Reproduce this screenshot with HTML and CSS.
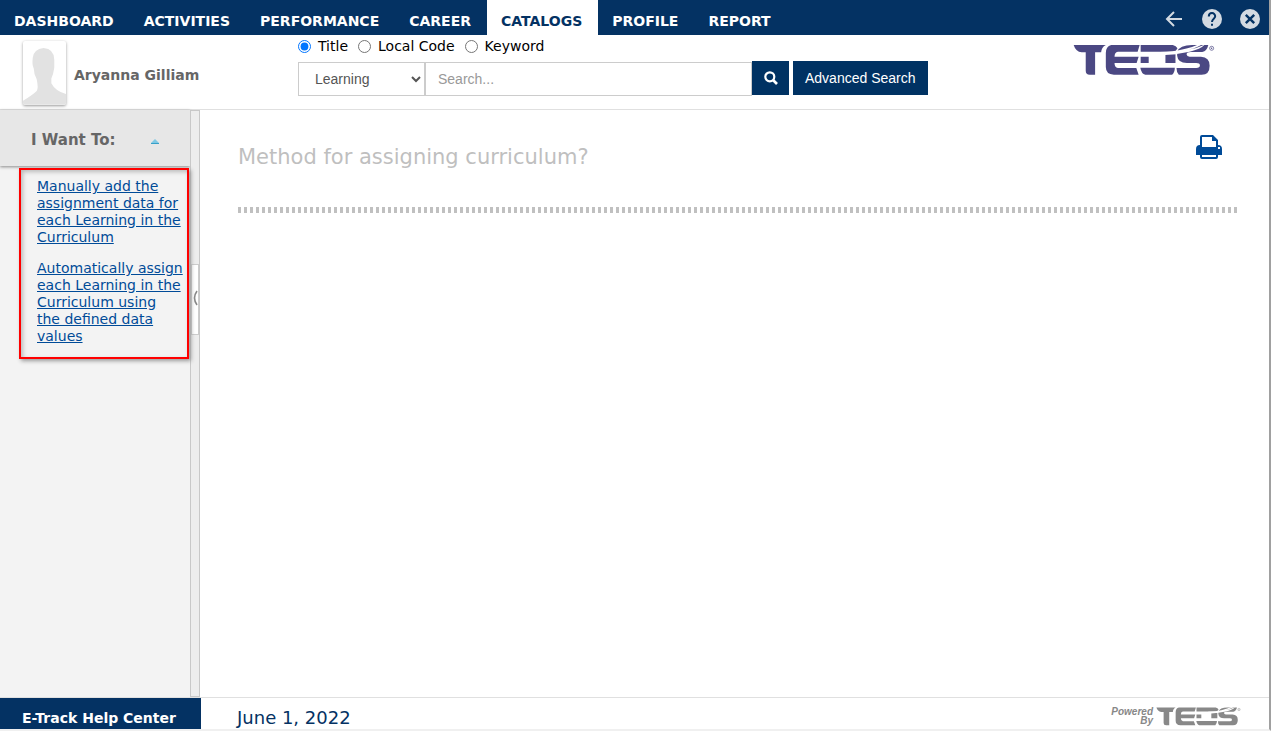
FILE: index.html
```html
<!DOCTYPE html>
<html lang="en">
<head>
<meta charset="utf-8">
<title>Method for assigning curriculum</title>
<link rel="stylesheet" href="styles.css">
</head>
<body>
<svg class="defs" aria-hidden="true">
  <symbol id="teds" viewBox="40 28 424 94">
    <path d="M42 30H138C129 34 125 42 124 52H106V119H90Q78 119 78 107V52H66Q48 50 42 30Z"/>
    <path d="M154 30H239L233 50H174Q164 51 164 65H236L230 84H164Q164 98 174 99H229L236 119H162Q138 118 138 96V54Q138 34 154 30Z"/>
    <path d="M242 30H338Q348 32 352 40L345 50H242ZM242 65H266V84H242ZM316 58H346V84H316ZM241 98H344Q344 112 336 119H256Q244 116 241 98Z"/>
    <path d="M396 30H444Q440 48 426 51H392Q380 51 379 58Q380 65 388 65H422Q448 66 448 92Q448 119 424 119H356Q349 112 349 99H408Q419 99 419 91Q419 84 408 84H380Q353 83 351 62V50Q358 30 396 30Z"/>
    <path d="M300 57V51Q340 51 366 44Q400 36 416 28H426Q412 38 386 44Q412 40 434 29Q420 44 388 50Q350 58 315 60Z" fill="#fff"/>
    <path d="M347 28H378Q364 32 356 41Z" fill="#fff"/>
    <circle cx="454" cy="40" r="6" fill="none" stroke="currentColor" stroke-width="2"/>
    <circle cx="454" cy="40" r="2"/>
  </symbol>
</svg>
<div class="app">
  <header class="topbar">
    <nav class="menu" aria-label="Main">
      <a href="#">DASHBOARD</a>
      <a href="#">ACTIVITIES</a>
      <a href="#">PERFORMANCE</a>
      <a href="#">CAREER</a>
      <a href="#" class="current" aria-current="page">CATALOGS</a>
      <a href="#">PROFILE</a>
      <a href="#">REPORT</a>
    </nav>
    <div class="tools">
      <button type="button" aria-label="Back"><svg viewBox="0 0 20 20"><path d="M18 10H3M10 3L3 10L10 17" fill="none" stroke="currentColor" stroke-width="2"/></svg></button>
      <button type="button" aria-label="Help"><svg viewBox="0 0 20 20"><circle cx="10" cy="10" r="10" fill="currentColor"/><path d="M6.8 7.5C6.8 3 13.2 3 13.2 7.3C13.2 9.8 10 9.8 10 13" fill="none" stroke="#043263" stroke-width="2"/><path d="M9 14.8h2v2H9z" fill="#043263"/></svg></button>
      <button type="button" aria-label="Close"><svg viewBox="0 0 20 20"><circle cx="10" cy="10" r="10" fill="currentColor"/><path d="M5.8 5.8L14.2 14.2M14.2 5.8L5.8 14.2" stroke="#043263" stroke-width="2.4"/></svg></button>
    </div>
  </header>

  <section class="banner">
    <div class="user">
      <svg class="avatar" viewBox="0 0 44 65" aria-hidden="true"><path d="M0 65V61Q10 55 14 51Q16 48 14 39Q11 33 11 28Q9 24 10 17Q11 8 21 7Q32 8 32 19V27Q31 34 29 38V43Q33 51 44 54V65Z" fill="#e2e2e2"/></svg>
      <span>Aryanna Gilliam</span>
    </div>
    <form class="search">
      <div class="scope">
        <label><input type="radio" name="scope" checked>Title</label>
        <label><input type="radio" name="scope">Local Code</label>
        <label><input type="radio" name="scope">Keyword</label>
      </div>
      <div class="fields">
        <select aria-label="Catalog"><option>Learning</option></select>
        <input type="text" placeholder="Search..." aria-label="Search">
        <button class="find" type="button" aria-label="Search"><svg viewBox="0 0 14 14"><circle cx="5.8" cy="5.8" r="4.5" fill="none" stroke="currentColor" stroke-width="2.2"/><path d="M9 9l4 4" stroke="currentColor" stroke-width="2.6"/></svg></button>
        <button class="advanced" type="button">Advanced Search</button>
      </div>
    </form>
    <svg class="brand" role="img" aria-label="TEDS"><use href="#teds"/></svg>
  </section>

  <div class="body">
    <aside class="side">
      <h2>I Want To: <svg viewBox="0 0 8 5" aria-hidden="true"><path d="M0 5V4L4 0L8 4V5Z" fill="#7fc8e4"/><path d="M0 4h8v1H0z" fill="#38a0c8"/></svg></h2>
      <div class="options">
        <a href="#">Manually add the assignment data for each Learning in the Curriculum</a>
        <a href="#">Automatically assign each Learning in the Curriculum using<br>the defined data values</a>
      </div>
    </aside>
    <div class="splitter">
      <button type="button" aria-label="Collapse panel"><svg viewBox="0 0 5 16"><path d="M4 1Q-1 8 4 15" fill="none" stroke="#888" stroke-width="1.6"/></svg></button>
    </div>
    <main class="content">
      <div class="heading">
        <h1>Method for assigning curriculum?</h1>
        <button type="button" aria-label="Print"><svg viewBox="0 0 26 24"><path fill-rule="evenodd" d="M4 10V2Q4 0 6 0H17L22 5V10Q26 10 26 14V20H22V22Q22 24 20 24H6Q4 24 4 22V20H0V14Q0 10 4 10ZM6 2V12H20V6H16V2ZM6 20V22H20V20ZM22 12V14H24V12Z" fill="#004b98"/></svg></button>
      </div>
      <div class="rule"></div>
    </main>
  </div>

  <footer class="footer">
    <a class="help" href="#">E-Track Help Center</a>
    <span class="date">June 1, 2022</span>
    <div class="powered">
      <span>Powered<br>By</span>
      <svg role="img" aria-label="TEDS"><use href="#teds"/></svg>
    </div>
  </footer>
</div>
</body>
</html>
```
FILE: styles.css
```css
* { box-sizing: border-box; }
body {
  margin: 0;
  font-family: Verdana, "DejaVu Sans", sans-serif;
  font-size: 14px;
  color: #000;
  background: #fff;
}
button { border: 0; padding: 0; background: none; cursor: pointer; }
svg { display: block; }
.defs { display: none; }

.app {
  display: flex;
  flex-direction: column;
  height: 100vh;
  border-right: 2px solid #a0a0a0;
  border-bottom: 2px solid #f0f0f0;
}

.topbar {
  display: flex;
  justify-content: space-between;
  height: 35px;
  flex: none;
  background: #043263;
}
.menu { display: flex; }
.menu a {
  padding: 7px 16px 0 14px;
  line-height: 28px;
  font-size: 14px;
  font-weight: bold;
  color: #fff;
  text-decoration: none;
}
.menu .current { background: #fff; color: #043263; }
.tools {
  display: flex;
  align-items: center;
  gap: 18px;
  padding: 3px 9px 0 0;
}
.tools button { color: #d3dae2; }
.tools svg { width: 20px; height: 20px; }

.banner {
  display: flex;
  flex: none;
  height: 75px;
  border-bottom: 1px solid #e0e0e0;
}
.user {
  display: flex;
  gap: 8px;
  width: 298px;
  padding: 6px 0 0 23px;
  line-height: 68px;
  font-weight: bold;
  color: #666;
}
.avatar { width: 43px; height: 64px; border-radius: 2px; box-shadow: 0 1px 3px #999; }
.search { display: flex; flex-direction: column; gap: 5px; }
.scope { display: flex; gap: 10px; padding-top: 2px; }
.scope label { display: flex; align-items: center; gap: 7px; line-height: 19px; }
.scope input { width: 13px; height: 13px; margin: 0; }
.fields { display: flex; height: 34px; font-family: "Liberation Sans", Arial, sans-serif; }
.fields > * { font-family: inherit; font-size: 14px; }
.fields select {
  width: 127px;
  margin-top: 1px;
  padding: 0 0 0 12px;
  height: 34px;
  border: 1px solid #ccc;
  border-radius: 0;
  background: #fff;
  color: #555;
}
.fields input {
  width: 327px;
  height: 34px;
  margin-top: 1px;
  padding: 0 12px;
  border: 1px solid #ccc;
  color: #555;
}
.fields input::placeholder { color: #999; }
.fields button { background: #003263; color: #fff; }
.find { display: grid; place-items: center; width: 37px; margin-right: 4px; }
.find svg { width: 14px; height: 14px; }
.advanced { padding: 0 12px; }
.brand { width: 142px; height: 32px; margin: 9px 54px 0 auto; color: #4b4883; fill: currentColor; }

.body { display: flex; flex: 1; min-height: 0; }
.side { width: 190px; background: #f3f3f3; }
.side h2 {
  display: flex;
  align-items: center;
  justify-content: space-between;
  height: 56px;
  margin: 0;
  padding: 4px 31px 0;
  font-size: 15px;
  color: #666;
  background: #e7e7e7;
  box-shadow: 0 1px 3px #888;
}
.side h2 svg { width: 8px; height: 5px; margin-top: 3px; }
.options {
  display: flex;
  flex-direction: column;
  gap: 14px;
  margin: 2px 1px 0 19px;
  padding: 8px 3px 12px 16px;
  border: 2px solid #f00;
  box-shadow: 2px 2px 4px #999, inset 2px 2px 4px #bbb;
  position: relative;
}
.options a { line-height: 17px; color: #004b98; }
.splitter {
  display: flex;
  align-items: flex-start;
  width: 10px;
  padding-top: 153px;
  border: 1px solid #c8c8c8;
  background: #ededed;
}
.splitter button {
  display: grid;
  place-items: center;
  width: 8px;
  height: 71px;
  padding-bottom: 4px;
  border: 1px solid #ccc;
  background: #fff;
}
.splitter svg { width: 5px; height: 16px; }
.content { flex: 1; padding: 25px 32px 0 38px; }
.heading { display: flex; justify-content: space-between; padding-right: 15px; }
.heading h1 {
  margin: 8px 0 0;
  font-size: 21px;
  line-height: 28px;
  font-weight: normal;
  color: #bfbfbf;
}
.heading svg { width: 26px; height: 24px; }
.heading button { align-self: flex-start; }
.rule {
  height: 6px;
  margin-top: 36px;
  background: repeating-linear-gradient(90deg, #c0c0c0 0 3px, transparent 3px 6px);
}

.footer {
  display: flex;
  flex: none;
  height: 32px;
  border-top: 1px solid #e0e0e0;
}
.help {
  width: 201px;
  padding: 8px 0 0 22px;
  line-height: 24px;
  font-size: 14px;
  font-weight: bold;
  color: #fff;
  background: #043263;
  text-decoration: none;
}
.date { padding: 8px 0 0 36px; font-size: 18px; line-height: 24px; color: #043263; }
.powered {
  display: flex;
  align-items: flex-start;
  gap: 3px;
  margin-left: auto;
  padding: 9px 28px 0 0;
  font: italic bold 10px/9px "Liberation Sans", Arial, sans-serif;
  text-align: right;
  color: #888;
  fill: currentColor;
}
.powered svg { width: 85px; height: 19px; }
```
